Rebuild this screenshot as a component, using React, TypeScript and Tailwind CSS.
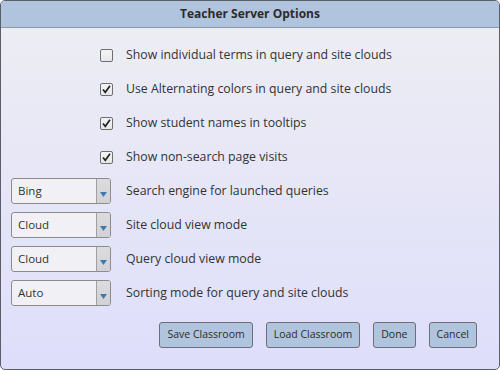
const checks = [
  { label: "Show individual terms in query and site clouds", checked: false },
  { label: "Use Alternating colors in query and site clouds", checked: true },
  { label: "Show student names in tooltips", checked: true },
  { label: "Show non-search page visits", checked: true },
];

const selects = [
  { value: "Bing", label: "Search engine for launched queries" },
  { value: "Cloud", label: "Site cloud view mode" },
  { value: "Cloud", label: "Query cloud view mode" },
  { value: "Auto", label: "Sorting mode for query and site clouds" },
];

const buttons = ["Save Classroom", "Load Classroom", "Done", "Cancel"];

function CheckBox({ checked }: { checked: boolean }) {
  return (
    <div className="w-[13px] h-[13px] rounded-[2px] border border-[#6f6f6f] bg-gradient-to-b from-[#f4f4f4] to-[#e8e8ec] flex items-center justify-center">
      {checked && (
        <svg width="11" height="11" viewBox="0 0 11 11">
          <path d="M2 5.5 L4.3 8.3 L9 1.8" fill="none" stroke="#222" strokeWidth="1.7" />
        </svg>
      )}
    </div>
  );
}

function Dropdown({ value }: { value: string }) {
  return (
    <div className="w-[100px] h-[26px] flex rounded-[3px] border border-[#8c8c8c] bg-[#f1f1f5] overflow-hidden">
      <div className="flex-1 flex items-center pl-[6px] text-[11.5px] text-[#333]">{value}</div>
      <div className="w-[14px] border-l border-[#a0a0a0] bg-gradient-to-b from-[#dcdcdf] to-[#d2d2d6] flex items-end justify-center pb-[6px]">
        <svg width="7" height="5" viewBox="0 0 7 5">
          <path d="M0 0 H7 L3.5 5 Z" fill="#3d7ab5" />
        </svg>
      </div>
    </div>
  );
}

export default function App() {
  return (
    <div className="w-[500px] h-[370px] bg-white" style={{ fontFamily: '"Open Sans", "Noto Sans", sans-serif' }}>
      <div className="w-[500px] h-[370px] rounded-[5px] border border-[#5a5e68] overflow-hidden flex flex-col bg-gradient-to-b from-[#eeeef3] to-[#dedefb]">
        {/* Title bar */}
        <div className="h-[27px] bg-[#b0c4de] border-b border-[#8e9aa8] flex items-center justify-center">
          <span className="text-[12px] font-bold text-[#2c2c2c]">Teacher Server Options</span>
        </div>

        <div className="flex flex-col pt-[10px]">
          {checks.map((c) => (
            <div key={c.label} className="h-[34px] flex items-center">
              <div className="w-[125px] flex justify-end pr-[13px]">
                <CheckBox checked={c.checked} />
              </div>
              <span className="text-[12.3px] text-[#333]">{c.label}</span>
            </div>
          ))}
          {selects.map((s, i) => (
            <div key={i} className="h-[34px] flex items-center">
              <div className="w-[125px] pl-[10px]">
                <Dropdown value={s.value} />
              </div>
              <span className="text-[12.3px] text-[#333]">{s.label}</span>
            </div>
          ))}
        </div>

        {/* Buttons */}
        <div className="flex justify-end gap-[13px] pr-[22px] pt-[12px]">
          {buttons.map((b) => (
            <button
              key={b}
              className="h-[26px] px-[7px] rounded-[3px] border border-[#6c6f78] bg-[#b0c4de] text-[10.5px] text-[#2c2c2c]"
            >
              {b}
            </button>
          ))}
        </div>
      </div>
    </div>
  );
}
